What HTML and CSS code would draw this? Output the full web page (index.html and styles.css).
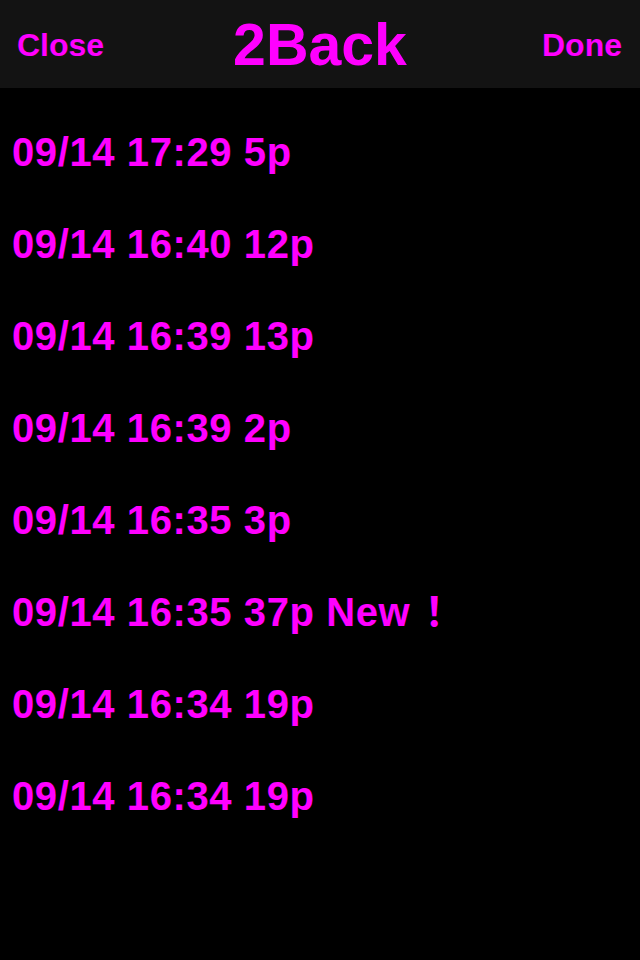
FILE: index.html
```html
<!DOCTYPE html>
<html>
<head>
<meta charset="utf-8">
<link rel="stylesheet" href="styles.css">
</head>
<body>
<header class="bar">
  <span class="btn btn-left">Close</span>
  <span class="title">2Back</span>
  <span class="btn btn-right">Done</span>
</header>
<ul class="list">
  <li class="row">09/14 17:29 5p</li>
  <li class="row">09/14 16:40 12p</li>
  <li class="row">09/14 16:39 13p</li>
  <li class="row">09/14 16:39 2p</li>
  <li class="row">09/14 16:35 3p</li>
  <li class="row">09/14 16:35 37p New<span class="bang">！</span></li>
  <li class="row">09/14 16:34 19p</li>
  <li class="row">09/14 16:34 19p</li>
</ul>
</body>
</html>
```
FILE: styles.css
```css
html, body {
  margin: 0;
  padding: 0;
  background: #000;
  width: 640px;
  height: 960px;
  overflow: hidden;
}
body {
  font-family: "Liberation Sans", Arial, "Noto Sans CJK JP", sans-serif;
  font-weight: bold;
  color: #ff00ff;
}
.bar {
  height: 88px;
  background: #131313;
  display: grid;
  grid-template-columns: 1fr auto 1fr;
  align-items: start;
}
.btn {
  font-size: 32px;
  line-height: 32px;
  padding-top: 29px;
}
.btn-left {
  justify-self: start;
  padding-left: 17px;
}
.btn-right {
  justify-self: end;
  padding-right: 18px;
}
.title {
  font-size: 59px;
  line-height: 58px;
  padding-top: 16px;
}
.list {
  list-style: none;
  margin: 0;
  padding: 18px 0 0 12px;
}
.row {
  font-size: 40px;
  line-height: 92px;
  height: 92px;
  letter-spacing: 0.6px;
  white-space: nowrap;
}
.bang {
  margin-left: 4px;
}
```
